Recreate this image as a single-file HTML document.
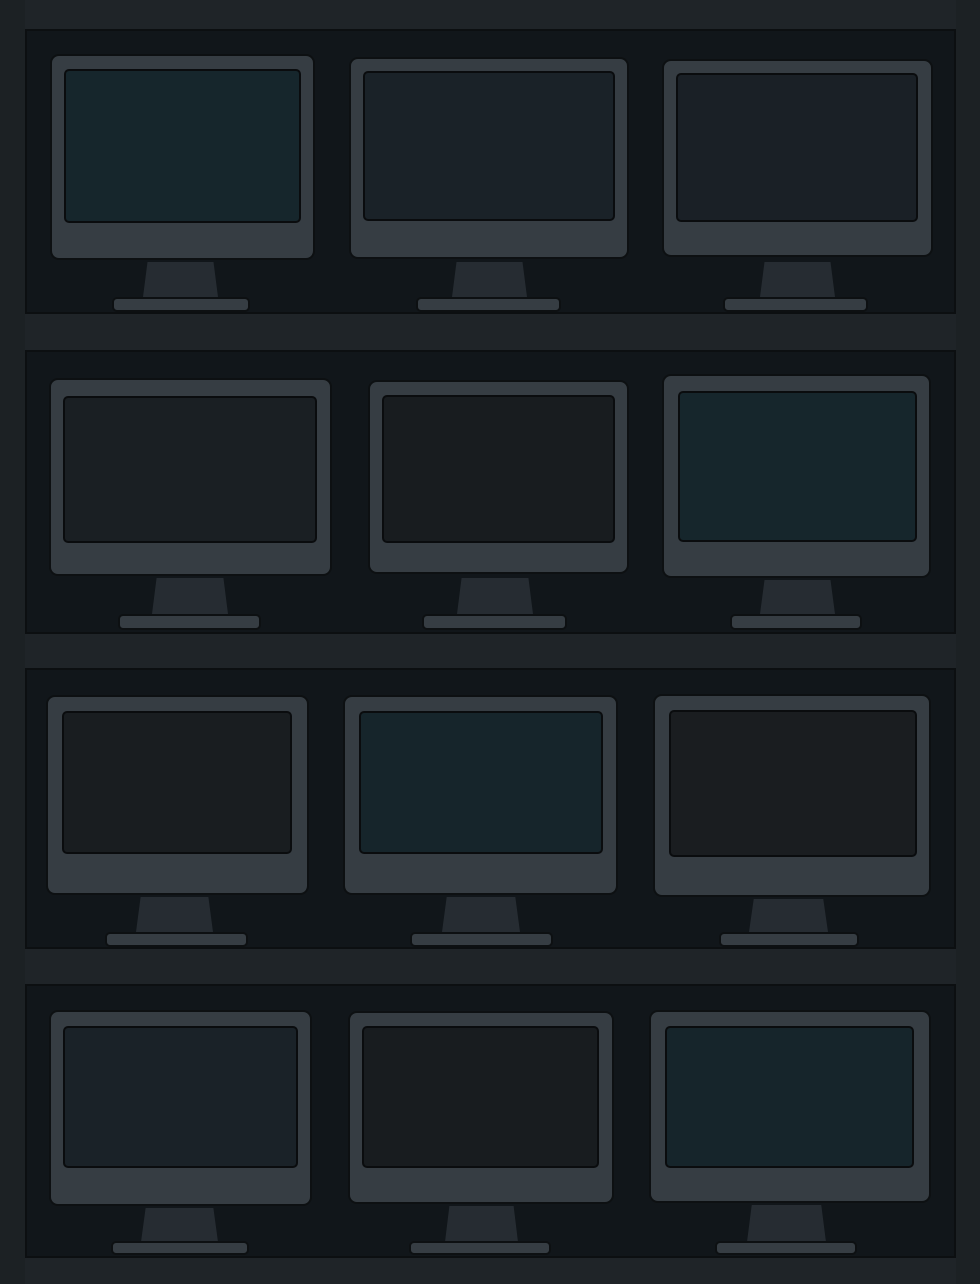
<!DOCTYPE html>
<html><head><meta charset="utf-8"><style>
body{margin:0;width:980px;height:1284px;background:#1f2428;position:relative;overflow:hidden}
div{position:absolute;box-sizing:border-box}
.in{background:#11161a;border:2px solid #0c0f11;left:25px;width:931px}
.bz{background:#363d43;border:2px solid #0d1012;border-radius:9px}
.sc{border:2px solid #0a0c0e;border-radius:5px}
.nk{background:#262c32;clip-path:polygon(6% 0,94% 0,100% 100%,0 100%)}
.bs{background:#363d43;border:2px solid #0d1012;border-radius:5px}
</style></head><body>
<div style="left:0;top:0;width:25px;height:1284px;background:#1c2124"></div>
<div style="left:956px;top:0;width:24px;height:1284px;background:#1c2124"></div>
<div class="in" style="top:29px;height:285px"></div>
<div class="in" style="top:350px;height:284px"></div>
<div class="in" style="top:668px;height:281px"></div>
<div class="in" style="top:984px;height:274px"></div>
<div id="m"></div>
<script>
const M=[
[50,315,54,260,64,301,69,223,143,218,262,295,112,250,297,312,'#16262c'],
[349,629,57,259,363,615,71,221,452,527,262,295,416,561,297,312,'#1a2228'],
[662,933,59,257,676,918,73,222,760,835,262,295,723,868,297,312,'#1a2026'],
[49,332,378,576,63,317,396,543,152,228,578,612,118,261,614,630,'#1a1f23'],
[368,629,380,574,382,615,395,543,457,533,578,612,422,567,614,630,'#181c1f'],
[662,931,374,578,678,917,391,542,760,835,580,612,730,862,614,630,'#16262c'],
[46,309,695,895,62,292,711,854,136,213,897,930,105,248,932,947,'#191d20'],
[343,618,695,895,359,603,711,854,442,520,897,930,410,553,932,947,'#16252b'],
[653,931,694,897,669,917,710,857,749,828,899,930,719,859,932,947,'#1a1d20'],
[49,312,1010,1206,63,298,1026,1168,141,218,1208,1240,111,249,1241,1255,'#1a2228'],
[348,614,1011,1204,362,599,1026,1168,445,518,1206,1240,409,551,1241,1255,'#181c1f'],
[649,931,1010,1203,665,914,1026,1168,747,826,1205,1240,715,857,1241,1255,'#16252b']];
let h='';
for(const a of M){
h+=`<div class="nk" style="left:${a[8]}px;top:${a[10]}px;width:${a[9]-a[8]}px;height:${a[11]-a[10]+2}px"></div>`;
h+=`<div class="bs" style="left:${a[12]}px;top:${a[14]}px;width:${a[13]-a[12]}px;height:${a[15]-a[14]}px"></div>`;
h+=`<div class="bz" style="left:${a[0]}px;top:${a[2]}px;width:${a[1]-a[0]}px;height:${a[3]-a[2]}px"></div>`;
h+=`<div class="sc" style="left:${a[4]}px;top:${a[6]}px;width:${a[5]-a[4]}px;height:${a[7]-a[6]}px;background:${a[16]}"></div>`;
}
document.getElementById('m').outerHTML=h;
</script>
</body></html>
